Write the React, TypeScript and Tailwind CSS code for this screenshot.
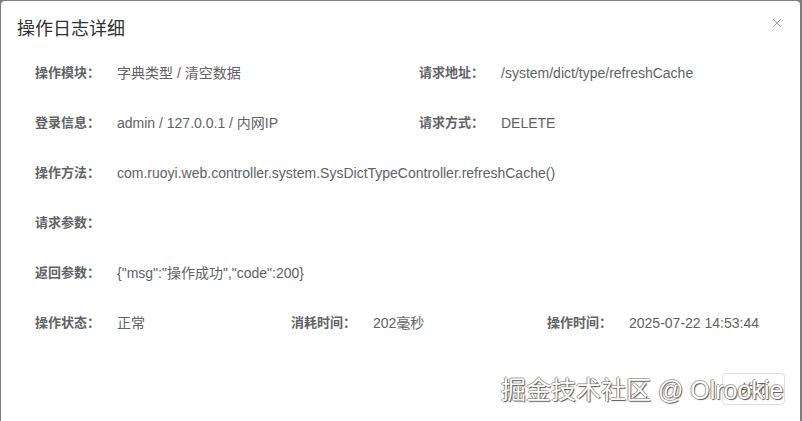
import { X } from "lucide-react";

type Item = { label: string; value: string };

const twoCol: Item[][] = [
  [
    { label: "操作模块：", value: "字典类型 / 清空数据" },
    { label: "请求地址：", value: "/system/dict/type/refreshCache" },
  ],
  [
    { label: "登录信息：", value: "admin / 127.0.0.1 / 内网IP" },
    { label: "请求方式：", value: "DELETE" },
  ],
];

const fullRows: Item[] = [
  { label: "操作方法：", value: "com.ruoyi.web.controller.system.SysDictTypeController.refreshCache()" },
  { label: "请求参数：", value: "" },
  { label: "返回参数：", value: '{"msg":"操作成功","code":200}' },
];

const lastRow: Item[] = [
  { label: "操作状态：", value: "正常" },
  { label: "消耗时间：", value: "202毫秒" },
  { label: "操作时间：", value: "2025-07-22 14:53:44" },
];

function Field({ item }: { item: Item }) {
  return (
    <div className="flex items-center h-[50px] text-[#606266]">
      <span className="w-[82px] shrink-0 text-[13px] font-bold">{item.label}</span>
      <span className="whitespace-nowrap text-[14px]">{item.value}</span>
    </div>
  );
}

export default function App() {
  return (
    <div
      className="w-[802px] h-[421px] overflow-hidden bg-[#7d7d7d] pt-px pl-px pr-[2px]"
      style={{ fontFamily: '"Liberation Sans", Arial, "Noto Sans CJK SC", sans-serif' }}
    >
      <div className="relative h-[440px] bg-white rounded-t-[4px]">
        {/* header */}
        <div className="flex items-center justify-between pl-4 pr-[16px] pt-[16px]">
          <h2 className="text-[18px] leading-6 text-[#303133]">操作日志详细</h2>
          <X className="w-[14px] h-[14px] text-[#909399] -mt-[12px]" strokeWidth={1.4} />
        </div>

        {/* body */}
        <div className="pl-[34px] pt-[7px]">
          {twoCol.map((row, i) => (
            <div key={i} className="grid grid-cols-[384px_384px]">
              {row.map((it) => (
                <Field key={it.label} item={it} />
              ))}
            </div>
          ))}
          {fullRows.map((it) => (
            <Field key={it.label} item={it} />
          ))}
          <div className="grid grid-cols-[256px_256px_256px]">
            {lastRow.map((it) => (
              <Field key={it.label} item={it} />
            ))}
          </div>
        </div>

        {/* footer */}
        <div className="flex justify-end pr-[15px] pt-[25px]">
          <button className="w-[63px] h-[32px] border border-[#dcdfe6] rounded-[4px] text-[13px] text-[#606266] bg-white">
            关闭
          </button>
        </div>

        {/* watermark */}
        <div className="absolute left-[500px] top-[373px] text-[25px] leading-8 text-white whitespace-nowrap [text-shadow:1px_1px_1px_#555,-1px_0_0_#999,0_-1px_0_#aaa]">
          掘金技术社区 @ Olrookie
        </div>
      </div>
    </div>
  );
}
